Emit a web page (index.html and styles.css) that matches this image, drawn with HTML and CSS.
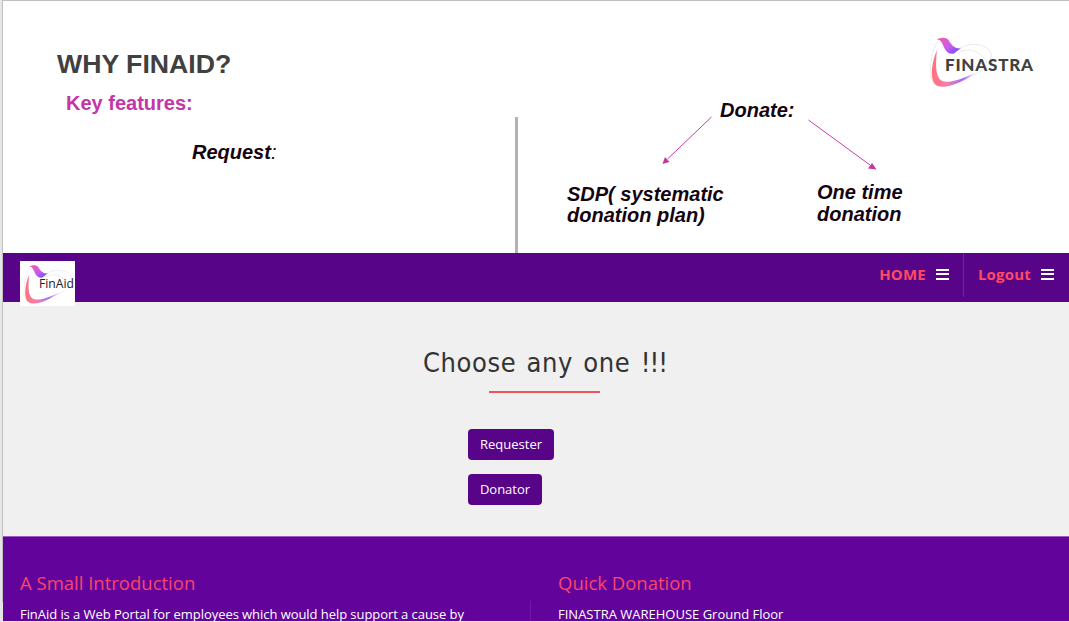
FILE: index.html
```html
<!DOCTYPE html>
<html lang="en">
<head>
  <meta charset="UTF-8">
  <meta name="viewport" content="width=device-width, initial-scale=1.0">
  <title>Why FinAid?</title>
  <link rel="stylesheet" href="styles.css">
</head>
<body>
  <div class="frame">
    <section class="slide">
      <div class="slide-left">
        <h1>WHY FINAID?</h1>
        <h2>Key features:</h2>
        <p class="request"><b>Request</b>:</p>
      </div>
      <div class="divider"></div>
      <div class="slide-right">
        <svg class="finastra" width="120" height="60" viewBox="0 0 120 60">
          <defs>
            <linearGradient id="ribbon" x1="0" y1="0" x2="1" y2="0">
              <stop offset="0" stop-color="#ff707c"/>
              <stop offset=".3" stop-color="#f97fa8"/>
              <stop offset=".7" stop-color="#a56cf6"/>
              <stop offset="1" stop-color="#eae4fc"/>
            </linearGradient>
            <linearGradient id="wing" x1="0" y1="0" x2="1" y2="1">
              <stop offset="0" stop-color="#f45ca4"/>
              <stop offset=".55" stop-color="#c75bf0"/>
              <stop offset="1" stop-color="#594bf5"/>
            </linearGradient>
            <g id="swoosh">
              <path d="M8 7 C2 17 -1 40 4 47 C8 55 22 50 38 44 M25 16 C42 5 59 9 62 19 C63 27 57 34 45 40 M28 18 C38 12 52 15 58 28" fill="none" stroke="#ebebed" stroke-width="1"/>
              <path d="M8 15 C3 26 1 41 5 48 C10 55 23 51 33 46 C39 43 43 41 47 38 C36 42 24 48 16 46.500 C7 46 6 33 8 15Z" fill="url(#ribbon)"/>
              <path d="M7.500 5 C11 2 17 2 19.500 5 C22 9 25 14 32 13.500 C29 15 27 17 25 18.500 C19 20 16 15 14 10 C12 6 11 4 7.500 5Z" fill="url(#wing)"/>
            </g>
          </defs>
          <use href="#swoosh"/>
          <text class="finastra-name" x="16" y="36" textLength="88" lengthAdjust="spacing">FINASTRA</text>
        </svg>
        <p class="donate">Donate:</p>
        <svg class="arrows" width="220" height="60" viewBox="0 0 220 60">
          <path d="M52.500 4 L8.500 46 M149.500 7 L211 52" fill="none" stroke="#c63fa8"/>
          <path d="M3.500 51 L6 44 L10.500 49Z M217.500 56.500 L209 55.500 L213 50Z" fill="#c435a5"/>
        </svg>
        <div class="plans">
          <p class="plan">SDP( systematic<br>donation plan)</p>
          <p class="plan one-time">One time<br>donation</p>
        </div>
      </div>
    </section>

    <nav class="navbar">
      <div class="brand">
        <svg width="55" height="45" viewBox="0 0 55 45">
          <use href="#swoosh" transform="translate(3 2) scale(.78)"/>
          <text class="brand-name" x="19" y="27" textLength="35" lengthAdjust="spacingAndGlyphs">FinAid</text>
        </svg>
      </div>
      <ul class="menu">
        <li>HOME <span class="bars"></span></li>
        <li>Logout <span class="bars"></span></li>
      </ul>
    </nav>

    <main class="choose">
      <h3>Choose any one <span class="marks">!!!</span></h3>
      <div class="underline"></div>
      <div class="buttons">
        <button class="button">Requester</button>
        <button class="button donator">Donator</button>
      </div>
    </main>

    <footer>
      <div class="footer-col intro">
        <h4>A Small Introduction</h4>
        <p class="intro-text">FinAid is a Web Portal for employees which would help support a cause by</p>
      </div>
      <div class="footer-col">
        <h4>Quick Donation</h4>
        <p class="address">FINASTRA WAREHOUSE Ground Floor</p>
      </div>
    </footer>
  </div>
</body>
</html>
```
FILE: styles.css
```css
* {
  box-sizing: border-box;
}
body {
  background: linear-gradient(#c0c0c0, #c0c0c0) 2px 0 / 1px 602px no-repeat, #e6e6e6;
  font-family: "Open Sans", sans-serif;
  margin: 0;
  padding-left: 3px;
  height: 622px;
  overflow: hidden;
}
h1, h2, h3, h4, p, ul {
  margin: 0;
  padding: 0;
}
.frame {
  height: 621px;
  overflow: hidden;
  border-top: 1px solid #c0c0c0;
}
.slide {
  background-color: #fff;
  height: 252px;
  display: grid;
  grid-template-columns: 512px 3px 1fr;
  font-family: "Liberation Sans", Arial, sans-serif;
  color: #15040f;
}
.slide-left {
  padding: 47px 0 0 54px;
}
.slide h1 {
  color: #404040;
  font-size: 26.67px;
  line-height: 32px;
}
.slide h2 {
  color: #c435a5;
  font-size: 20px;
  line-height: 24px;
  margin: 11px 0 0 9px;
}
.request {
  font-size: 20px;
  line-height: 24px;
  font-style: italic;
  margin: 25px 0 0 135px;
}
.divider {
  background-color: #b2b2b2;
  margin-top: 116px;
}
.slide-right {
  position: relative;
  display: flex;
  flex-direction: column;
  padding-top: 34px;
}
.finastra {
  align-self: flex-end;
  margin-right: 20px;
}
.finastra-name {
  font: 900 17px Lato, sans-serif;
  fill: #414042;
}
.donate {
  font-size: 20px;
  line-height: 24px;
  font-weight: bold;
  font-style: italic;
  margin: 3px 0 0 202px;
}
.arrows {
  position: absolute;
  left: 141px;
  top: 112px;
}
.plans {
  display: flex;
  margin: 61px 0 0 49px;
}
.plan {
  width: 250px;
  font-size: 20px;
  line-height: 21px;
  font-weight: bold;
  font-style: italic;
  padding-top: 1px;
}
.one-time {
  line-height: 22px;
  padding-top: 0;
  margin-top: -2px;
}
.navbar {
  background-color: #580489;
  height: 49px;
  display: flex;
  justify-content: space-between;
  align-items: flex-start;
}
.brand {
  background-color: #fff;
  width: 55px;
  height: 45px;
  margin: 8px 0 0 17px;
}
.brand svg {
  display: block;
}
.brand-name {
  font: 12px "Open Sans", sans-serif;
  fill: #222;
}
.menu {
  display: flex;
  list-style: none;
  margin-right: 1px;
}
.menu li {
  display: flex;
  align-items: center;
  gap: 10px;
  height: 44px;
  padding: 0 14px 2px;
  color: #ff4a62;
  font-size: 15px;
  font-weight: 700;
  letter-spacing: .2px;
}
.menu li + li {
  border-left: 1px solid #6e279a;
}
.bars {
  width: 13px;
  height: 11px;
  border-top: 2px solid #fff;
  border-bottom: 2px solid #fff;
  background: linear-gradient(#fff, #fff) 0 2.500px / 13px 2px no-repeat;
}
.choose {
  background-color: #f0f0f0;
  height: 234px;
  padding-top: 43px;
}
.choose h3 {
  color: #333;
  font: 27px/36px "DejaVu Sans Condensed", "DejaVu Sans", sans-serif;
  font-stretch: condensed;
  letter-spacing: .6px;
  word-spacing: 2px;
  margin-left: 420px;
  white-space: nowrap;
}
.choose .marks {
  letter-spacing: -1px;
}
.underline {
  width: 111px;
  height: 2px;
  background-color: #f0525a;
  margin: 10px 0 0 486px;
}
.buttons {
  display: flex;
  flex-direction: column;
  align-items: flex-start;
  gap: 14px;
  margin: 36px 0 0 465px;
}
.button {
  background-color: #580489;
  color: #fff;
  border: none;
  border-radius: 4px;
  width: 86px;
  height: 31px;
  padding: 0 0 1px;
  font: 13px "Open Sans", sans-serif;
}
.donator {
  width: 74px;
}
footer {
  background-color: #62049c;
  border-top: 1px solid #9c5cc0;
  height: 85px;
  display: flex;
  padding-left: 17px;
  color: #fff;
}
.footer-col {
  flex: 0 0 538px;
  padding-top: 33px;
}
.footer-col h4 {
  color: #fb4568;
  font-size: 18.500px;
  font-weight: 400;
  line-height: 26px;
}
.footer-col p {
  font-size: 13px;
  line-height: 20px;
  margin-top: 8px;
  white-space: nowrap;
}
.footer-col .intro-text {
  letter-spacing: -.06px;
}
.intro {
  background: linear-gradient(#7119a6, #7119a6) 510px 64px / 1px 30px no-repeat;
}
```
